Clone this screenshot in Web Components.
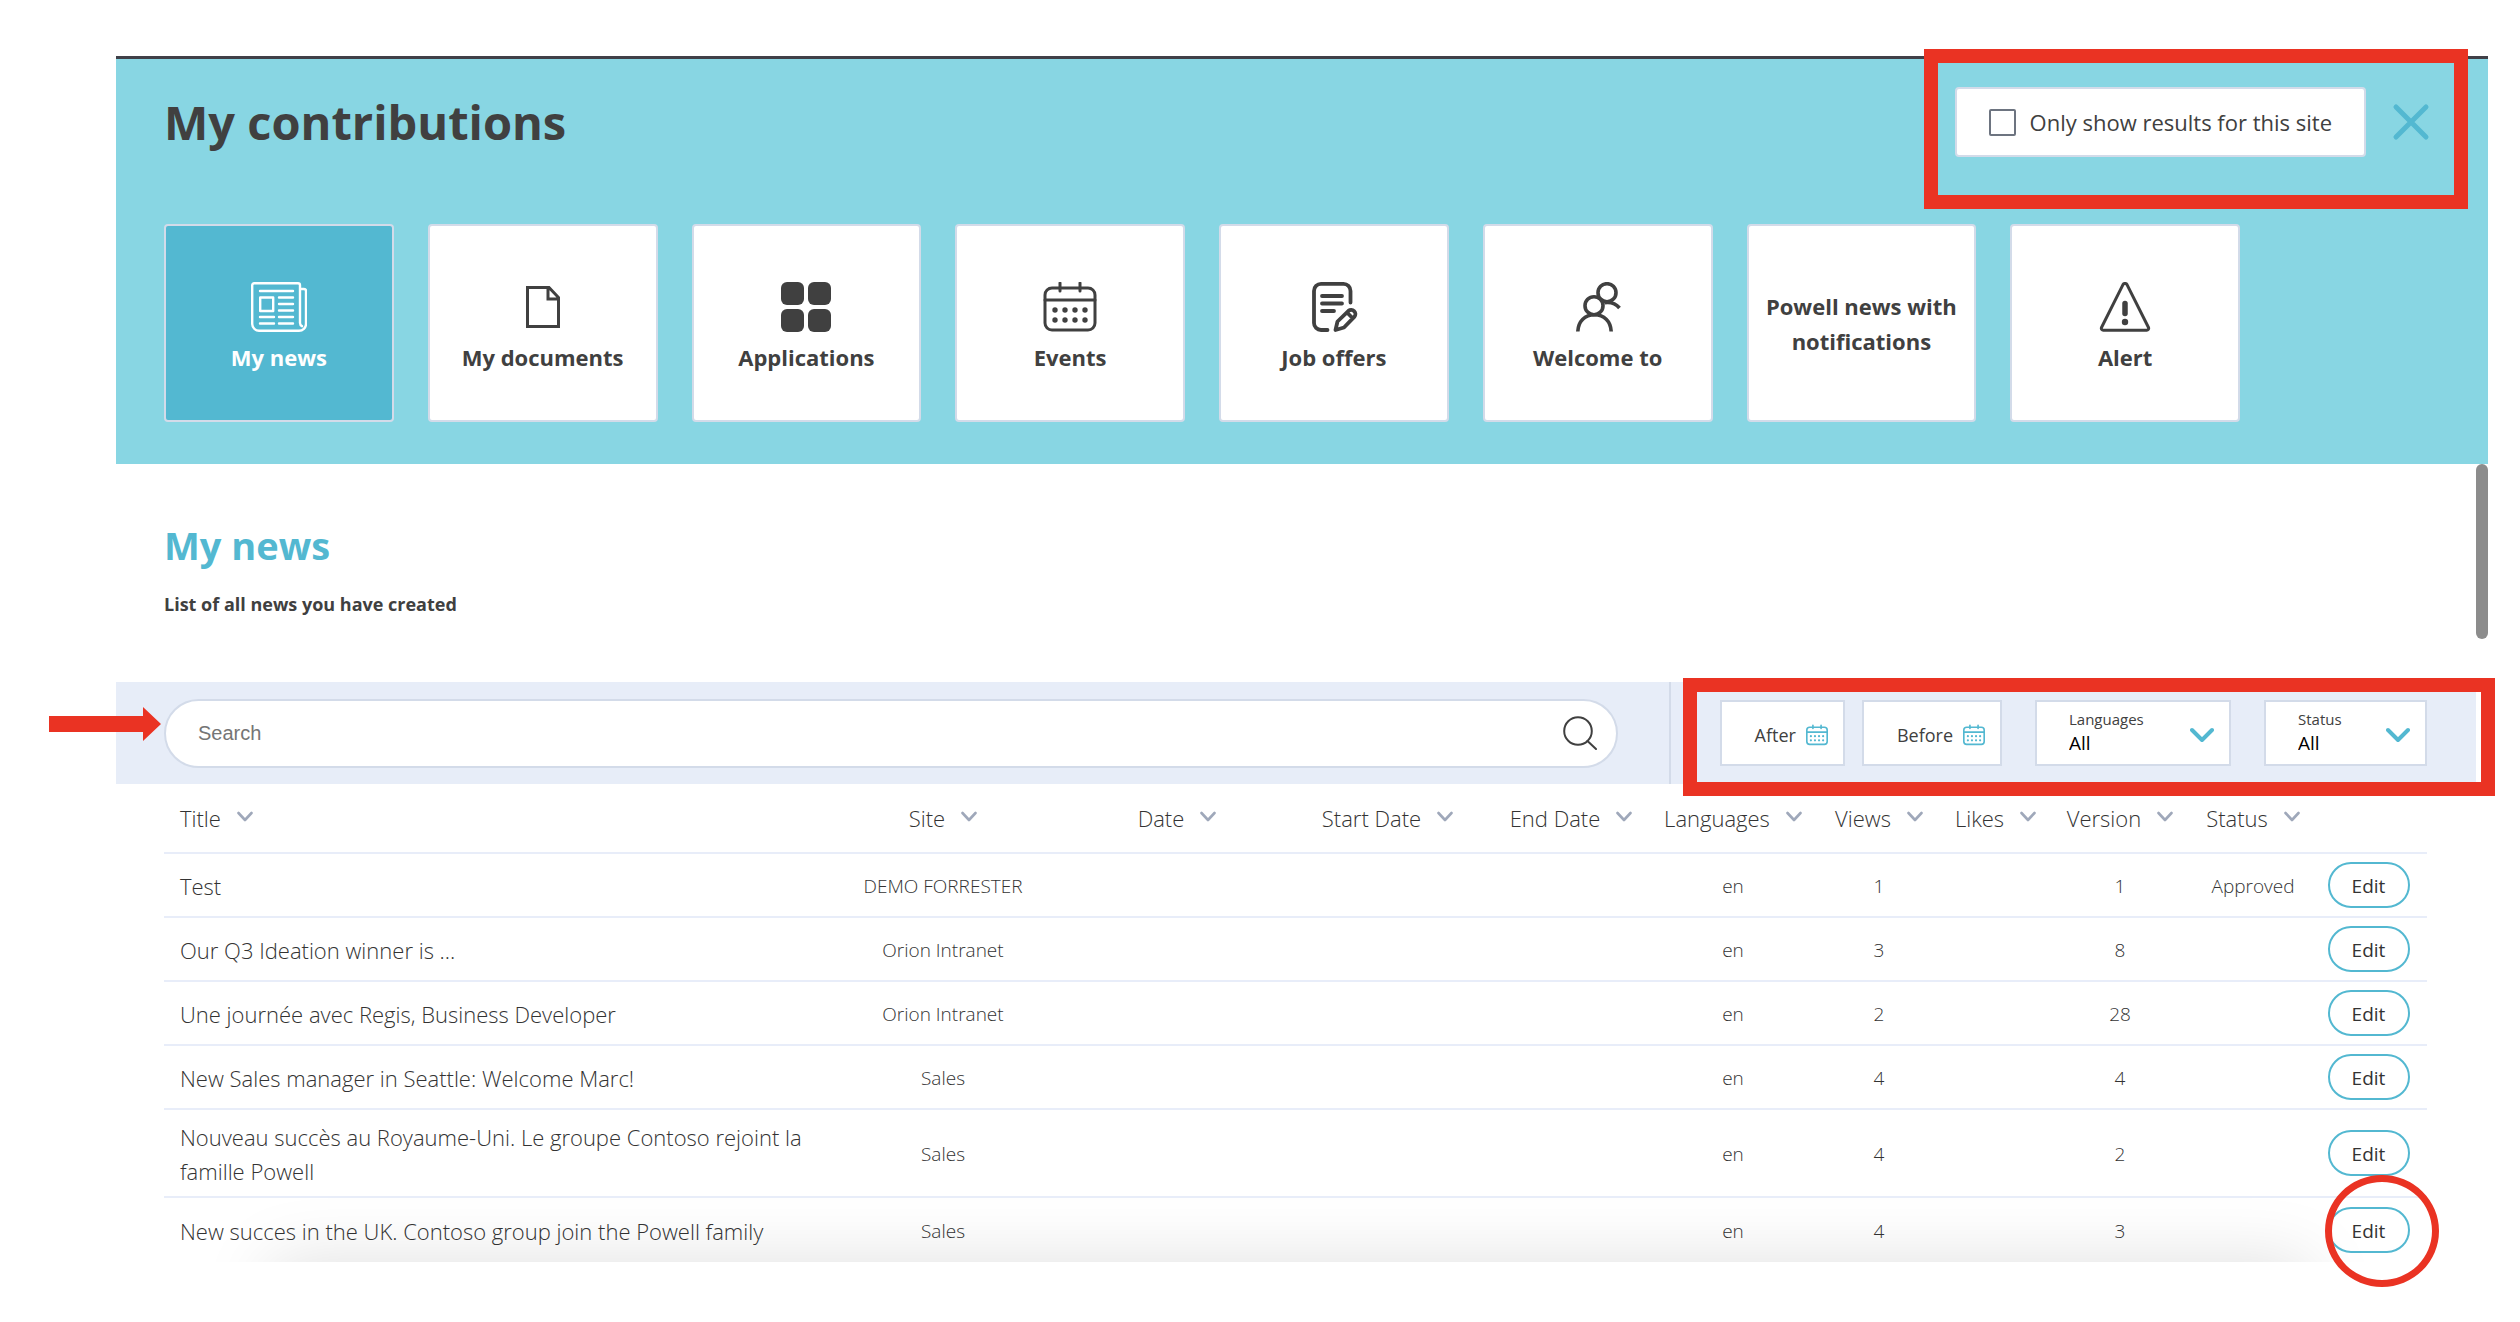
<!DOCTYPE html>
<html lang="en">
<head>
<meta charset="utf-8">
<title>My contributions</title>
<style>
  body { margin: 0; min-height: 100vh; display: flow-root; background: #fff; color: #404040; font-family: "Open Sans", "Noto Sans", sans-serif; }
</style>
</head>
<body>
<contributions-panel>
  <panel-header slot="header" heading="My contributions">
    <category-card icon="news" selected>My news</category-card>
    <category-card icon="document">My documents</category-card>
    <category-card icon="apps">Applications</category-card>
    <category-card icon="events">Events</category-card>
    <category-card icon="job">Job offers</category-card>
    <category-card icon="people">Welcome to</category-card>
    <category-card>Powell news with notifications</category-card>
    <category-card icon="alert">Alert</category-card>
  </panel-header>
  <section-intro>
    <span slot="title">My news</span>
    <span slot="text">List of all news you have created</span>
  </section-intro>
  <filter-bar>
    <date-filter>After</date-filter>
    <date-filter>Before</date-filter>
    <select-filter label="Languages" options="All,en,fr" class="wide"></select-filter>
    <select-filter label="Status" options="All,Approved,Draft"></select-filter>
  </filter-bar>
  <news-table></news-table>
</contributions-panel>

<script>
const RED = '#ea3323';

const calendarShapes = `
  <rect x="2" y="6" width="50" height="42" rx="7"/>
  <path d="M2 18H52M17 1V9M37 1V9"/>
  <g fill="currentColor" stroke="none">
    <circle cx="12" cy="28" r="2.7"/><circle cx="22" cy="28" r="2.7"/><circle cx="32" cy="28" r="2.7"/><circle cx="42" cy="28" r="2.7"/>
    <circle cx="12" cy="38" r="2.7"/><circle cx="22" cy="38" r="2.7"/><circle cx="32" cy="38" r="2.7"/><circle cx="42" cy="38" r="2.7"/>
  </g>`;

const icons = {
  news: ['0 0 56 50', `<g stroke-width="2.4">
    <path d="M49 7V41a3.500 3.500 0 0 0 2 3.200M49 7H53a2 2 0 0 1 2 2V42a7 7 0 0 1-7 6.800H8A7 7 0 0 1 1.200 42V3.200a2 2 0 0 1 2-2H47a2 2 0 0 1 2 2V7"/>
    <path d="M9 9H42M28 15.500H42M28 22H42M28 28.500H42M9 35H23M28 35H42M9 41.500H23M28 41.500H42"/>
    <rect x="9.200" y="15.500" width="13" height="13.500"/></g>`],
  document: ['0 0 56 50', `<path stroke-linejoin="miter" stroke-linecap="butt" d="M12.500 5.500H34L43.500 15.500V44.500H12.500ZM33 5.500V17H43.500"/>`],
  apps: ['0 0 56 50', `<g fill="currentColor" stroke="none"><rect x="3" y="0" width="23" height="23" rx="6"/><rect x="30" y="0" width="23" height="23" rx="6"/><rect x="3" y="27" width="23" height="23" rx="6"/><rect x="30" y="27" width="23" height="23" rx="6"/></g>`],
  events: ['-1 0 56 50', calendarShapes],
  job: ['0 0 56 50', `<g stroke-width="3.800"><path d="M21.500 48H15a7 7 0 0 1-7-7V8.900a7 7 0 0 1 7-7H37.500a7 7 0 0 1 7 7V20.500M16 14H36M16 21.500H36M16 29H28"/>
    <path d="M29.500 48L31.500 39.500 42.500 28.800a4.200 4.200 0 0 1 6 5.800L38 45.500ZM41 30.500L46.500 36"/></g>`],
  people: ['0 0 56 50', `<g stroke-width="3.600"><circle cx="24" cy="23.700" r="9"/><circle cx="37" cy="10.700" r="9"/>
    <path stroke-linecap="butt" d="M7.800 49.500C8.300 39 15 32.800 24.500 32.800S40.700 39 41.200 49.500M34.500 20.800C41 19.800 46 21.800 49.500 26"/></g>`],
  alert: ['0 0 56 50', `<path d="M26 2.600a2.300 2.300 0 0 1 4 0L51.500 45.500a2 2 0 0 1-2 2.800H6.500a2 2 0 0 1-2-2.800Z"/>
    <path stroke-width="5.500" d="M28 21.500V31.500"/><circle cx="28" cy="40" r="3.200" fill="currentColor" stroke="none"/>`],
};

const svg = (viewBox, body, width, height, stroke = 3) =>
  `<svg viewBox="${viewBox}" width="${width}" height="${height}" fill="none" stroke="currentColor" stroke-width="${stroke}" stroke-linecap="round" stroke-linejoin="round" aria-hidden="true">${body}</svg>`;

const base = `*{box-sizing:border-box} svg{display:block;flex:none} button,input,select{font:inherit;color:inherit;margin:0} button{cursor:pointer}`;

function define(name, render) {
  customElements.define(name, class extends HTMLElement {
    constructor() { super(); this.attachShadow({ mode: 'open' }); }
    connectedCallback() {
      const t = document.createElement('template');
      t.innerHTML = render(this);
      this.shadowRoot.replaceChildren(t.content.cloneNode(true));
    }
  });
}

/* Callouts laid over the interface: frame, arrow or ring. */
define('callout-mark', el => {
  const kind = el.getAttribute('kind');
  const shape = kind === 'arrow'
    ? `<svg viewBox="0 0 112 34" width="112" height="34"><path fill="${RED}" d="M0 9H94V0L112 17L94 34V25H0Z"/></svg>`
    : '';
  return `<style>${base}
    :host{display:block;position:absolute;pointer-events:none;z-index:3;box-sizing:border-box}
    :host([kind=frame]){border:14px solid ${RED}}
    :host([kind=ring]){border:7px solid ${RED};border-radius:50%}
  </style>${shape}`;
});

define('contributions-panel', () => `<style>${base}
    :host{display:block;margin:56px 32px 0 116px;padding-bottom:60px}
    .body{position:relative;padding-right:12px}
    .thumb{position:absolute;top:0;right:0;width:12px;height:175px;border-radius:6px;background:#8c8c8c}
  </style>
  <slot name="header"></slot>
  <div class="body"><slot></slot><div class="thumb"></div></div>`);

define('panel-header', el => `<style>${base}
    :host{display:block;position:relative;background:#88d6e3;border-top:3px solid #404048;padding:28px 0 42px 48px}
    .top{display:flex;justify-content:space-between;align-items:center;height:70px;padding-right:58px}
    h1{margin:0;font-size:47px;line-height:70px;font-weight:700}
    .tools{display:flex;align-items:center;gap:26px}
    label{display:flex;align-items:center;gap:14px;height:70px;padding:0 32px;background:#fff;border:2px solid #d3dbe9;border-radius:4px;font-size:22px}
    input{appearance:none;width:27px;height:27px;border:2px solid #6d7480;border-radius:2px;background:#fff}
    .close{display:block;border:0;background:none;padding:0;color:#53b8d1}
    .cards{display:grid;grid-template-columns:repeat(8,1fr);gap:34px;margin-top:67px;padding-right:248px}
    callout-mark{top:-10px;right:20px;width:544px;height:160px}
  </style>
  <div class="top">
    <h1>${el.getAttribute('heading')}</h1>
    <div class="tools">
      <label for="only"><input type="checkbox" id="only">Only show results for this site</label>
      <button class="close" aria-label="Close">${svg('0 0 38 38', '<path d="M4 4L34 34M34 4L4 34"/>', 38, 38, 5)}</button>
    </div>
  </div>
  <nav class="cards"><slot></slot></nav>
  <callout-mark kind="frame"></callout-mark>`);

define('category-card', el => {
  const icon = icons[el.getAttribute('icon')];
  return `<style>${base}
    :host{display:block}
    button{display:flex;flex-direction:column;align-items:center;justify-content:center;width:100%;height:198px;padding:2px 16px 0;background:#fff;border:2px solid #d3dbe9;border-radius:4px;font-size:22px;line-height:35px;font-weight:700;color:#404040}
    :host([selected]) button{background:#53b8d1;color:#fff}
    svg{margin:9px 0 8px}
  </style>
  <button>${icon ? svg(icon[0], icon[1], 56, 50) : ''}<span><slot></slot></span></button>`;
});

define('section-intro', () => `<style>${base}
    :host{display:block;padding:53px 48px 61px}
    h2{margin:0;font-size:38px;line-height:56px;font-weight:700;color:#53b8d1}
    p{margin:14px 0 0;font-size:18px;line-height:34px;font-weight:700}
  </style>
  <h2><slot name="title"></slot></h2><p><slot name="text"></slot></p>`);

define('filter-bar', () => `<style>${base}
    :host{display:flex;position:relative;background:#e7edf8;height:102px}
    .search{position:relative;flex:1;display:flex;align-items:center;padding:0 51px 0 48px;border-right:2px solid #d3dbe9}
    .pill{flex:1;display:flex;align-items:center;height:69px;border:2px solid #d3dbe9;border-radius:35px;background:#fff;padding:0 19px 0 32px}
    input{flex:1;min-width:0;border:0;outline:0;background:none;padding:0;font:20px "Liberation Sans",Arial,sans-serif}
    input::placeholder{color:#757575;opacity:1}
    .pill button{border:0;background:none;padding:0}
    .filters{display:flex;align-items:center;gap:17px;padding:0 49px}
    ::slotted(select-filter){margin-left:16px}
    .frame{top:-4px;right:-19px;width:812px;height:118px}
    .arrow{left:-67px;top:25px}
  </style>
  <div class="search">
    <div class="pill"><input type="text" placeholder="Search" aria-label="Search"><button aria-label="Run search">${svg('0 0 34 34', '<circle cx="15" cy="15" r="13.800"/><path d="M24.500 25L33 33"/>', 34, 34, 2)}</button></div>
    <callout-mark kind="arrow" class="arrow"></callout-mark>
  </div>
  <div class="filters"><slot></slot></div>
  <callout-mark kind="frame" class="frame"></callout-mark>`);

define('date-filter', () => `<style>${base}
    :host{display:block}
    button{display:flex;align-items:center;gap:10px;height:66px;padding:4px 15px 0 33px;background:#fff;border:2px solid #d3dbe9;font-size:18px}
    svg{color:#53b8d1}
  </style>
  <button><slot></slot>${svg('0 0 54 50', calendarShapes, 22, 22, 4)}</button>`);

define('select-filter', el => `<style>${base}
    :host{display:block;width:163px}
    :host(.wide){width:196px}
    .box{display:flex;align-items:center;height:66px;padding:0 15px 0 32px;background:#fff;border:2px solid #d3dbe9}
    .field{flex:1;display:flex;flex-direction:column;padding-bottom:3px}
    label{font-size:15px;line-height:22px}
    select{appearance:none;border:0;outline:0;background:none;padding:0;font-size:19px;line-height:26px;color:#000}
    svg{color:#53b8d1;margin-top:3px}
  </style>
  <div class="box"><div class="field">
    <label for="pick">${el.getAttribute('label')}</label>
    <select id="pick">${el.getAttribute('options').split(',').map(o => `<option>${o}</option>`).join('')}</select>
  </div>${svg('0 0 24 16', '<path d="M2 3L12 13L22 3"/>', 24, 16, 4)}</div>`);

const columns = [['Title', 656], ['Site', 246], ['Date', 222], ['Start Date', 199], ['End Date', 168], ['Languages', 156], ['Views', 136], ['Likes', 97], ['Version', 152], ['Status', 114]];
const rows = [
  ['Test', 'DEMO FORRESTER', 'en', 1, 1, 'Approved'],
  ['Our Q3 Ideation winner is ...', 'Orion Intranet', 'en', 3, 8, ''],
  ['Une journée avec Regis, Business Developer', 'Orion Intranet', 'en', 2, 28, ''],
  ['New Sales manager in Seattle: Welcome Marc!', 'Sales', 'en', 4, 4, ''],
  ['Nouveau succès au Royaume-Uni. Le groupe Contoso rejoint la famille Powell', 'Sales', 'en', 4, 2, ''],
  ['New succes in the UK. Contoso group join the Powell family', 'Sales', 'en', 4, 3, ''],
];
const chevron = svg('0 0 16 12', '<path d="M1.500 2L8 9L14.500 2"/>', 16, 12, 2.6);

define('news-table', () => `<style>${base}
    :host{display:block;position:relative}
    .clip{position:relative;overflow:hidden;padding:0 49px 0 48px}
    .clip::after{content:"";position:absolute;top:100%;left:154px;right:166px;height:200px;box-shadow:0 0 70px rgba(0,0,0,.13);pointer-events:none}
    table{width:100%;table-layout:fixed;border-collapse:separate;border-spacing:0;font-weight:300;color:#333}
    th,td{padding:0;text-align:center;vertical-align:middle;border-bottom:2px solid #e8edf9;white-space:nowrap;font-size:19px}
    th{height:70px;font-weight:300}
    td{height:64px;padding:2px 0 0}
    tr:last-child td{border:0}
    th:first-child,td:first-child{text-align:left;padding:0 16px;font-size:22px;line-height:34px;white-space:normal}
    td:first-child{padding:10px 16px 8px}
    .sort{display:inline-flex;align-items:center;gap:16px;border:0;background:none;padding:0;font-size:22px;line-height:34px}
    thead svg{color:#9fa8ba;margin-bottom:2px}
    .edit{display:inline-block;vertical-align:middle;width:82px;height:46px;margin:0 0 2px;padding:2px 0 0;border:2px solid #53b8d1;border-radius:23px;background:#fff;font-size:19px;font-weight:400}
    callout-mark{right:37px;bottom:-25px;width:114px;height:112px}
  </style>
  <div class="clip"><table>
    <colgroup>${columns.map(c => `<col style="width:${c[1]}px">`).join('')}<col style="width:117px"></colgroup>
    <thead><tr>${columns.map(c => `<th scope="col"><button class="sort">${c[0]}${chevron}</button></th>`).join('')}<th></th></tr></thead>
    <tbody>${rows.map(([title, site, lang, views, version, status]) =>
      `<tr><td>${title}</td><td>${site}</td><td></td><td></td><td></td><td>${lang}</td><td>${views}</td><td></td><td>${version}</td><td>${status}</td><td><button class="edit">Edit</button></td></tr>`).join('')}</tbody>
  </table></div>
  <callout-mark kind="ring"></callout-mark>`);
</script>
</body>
</html>
